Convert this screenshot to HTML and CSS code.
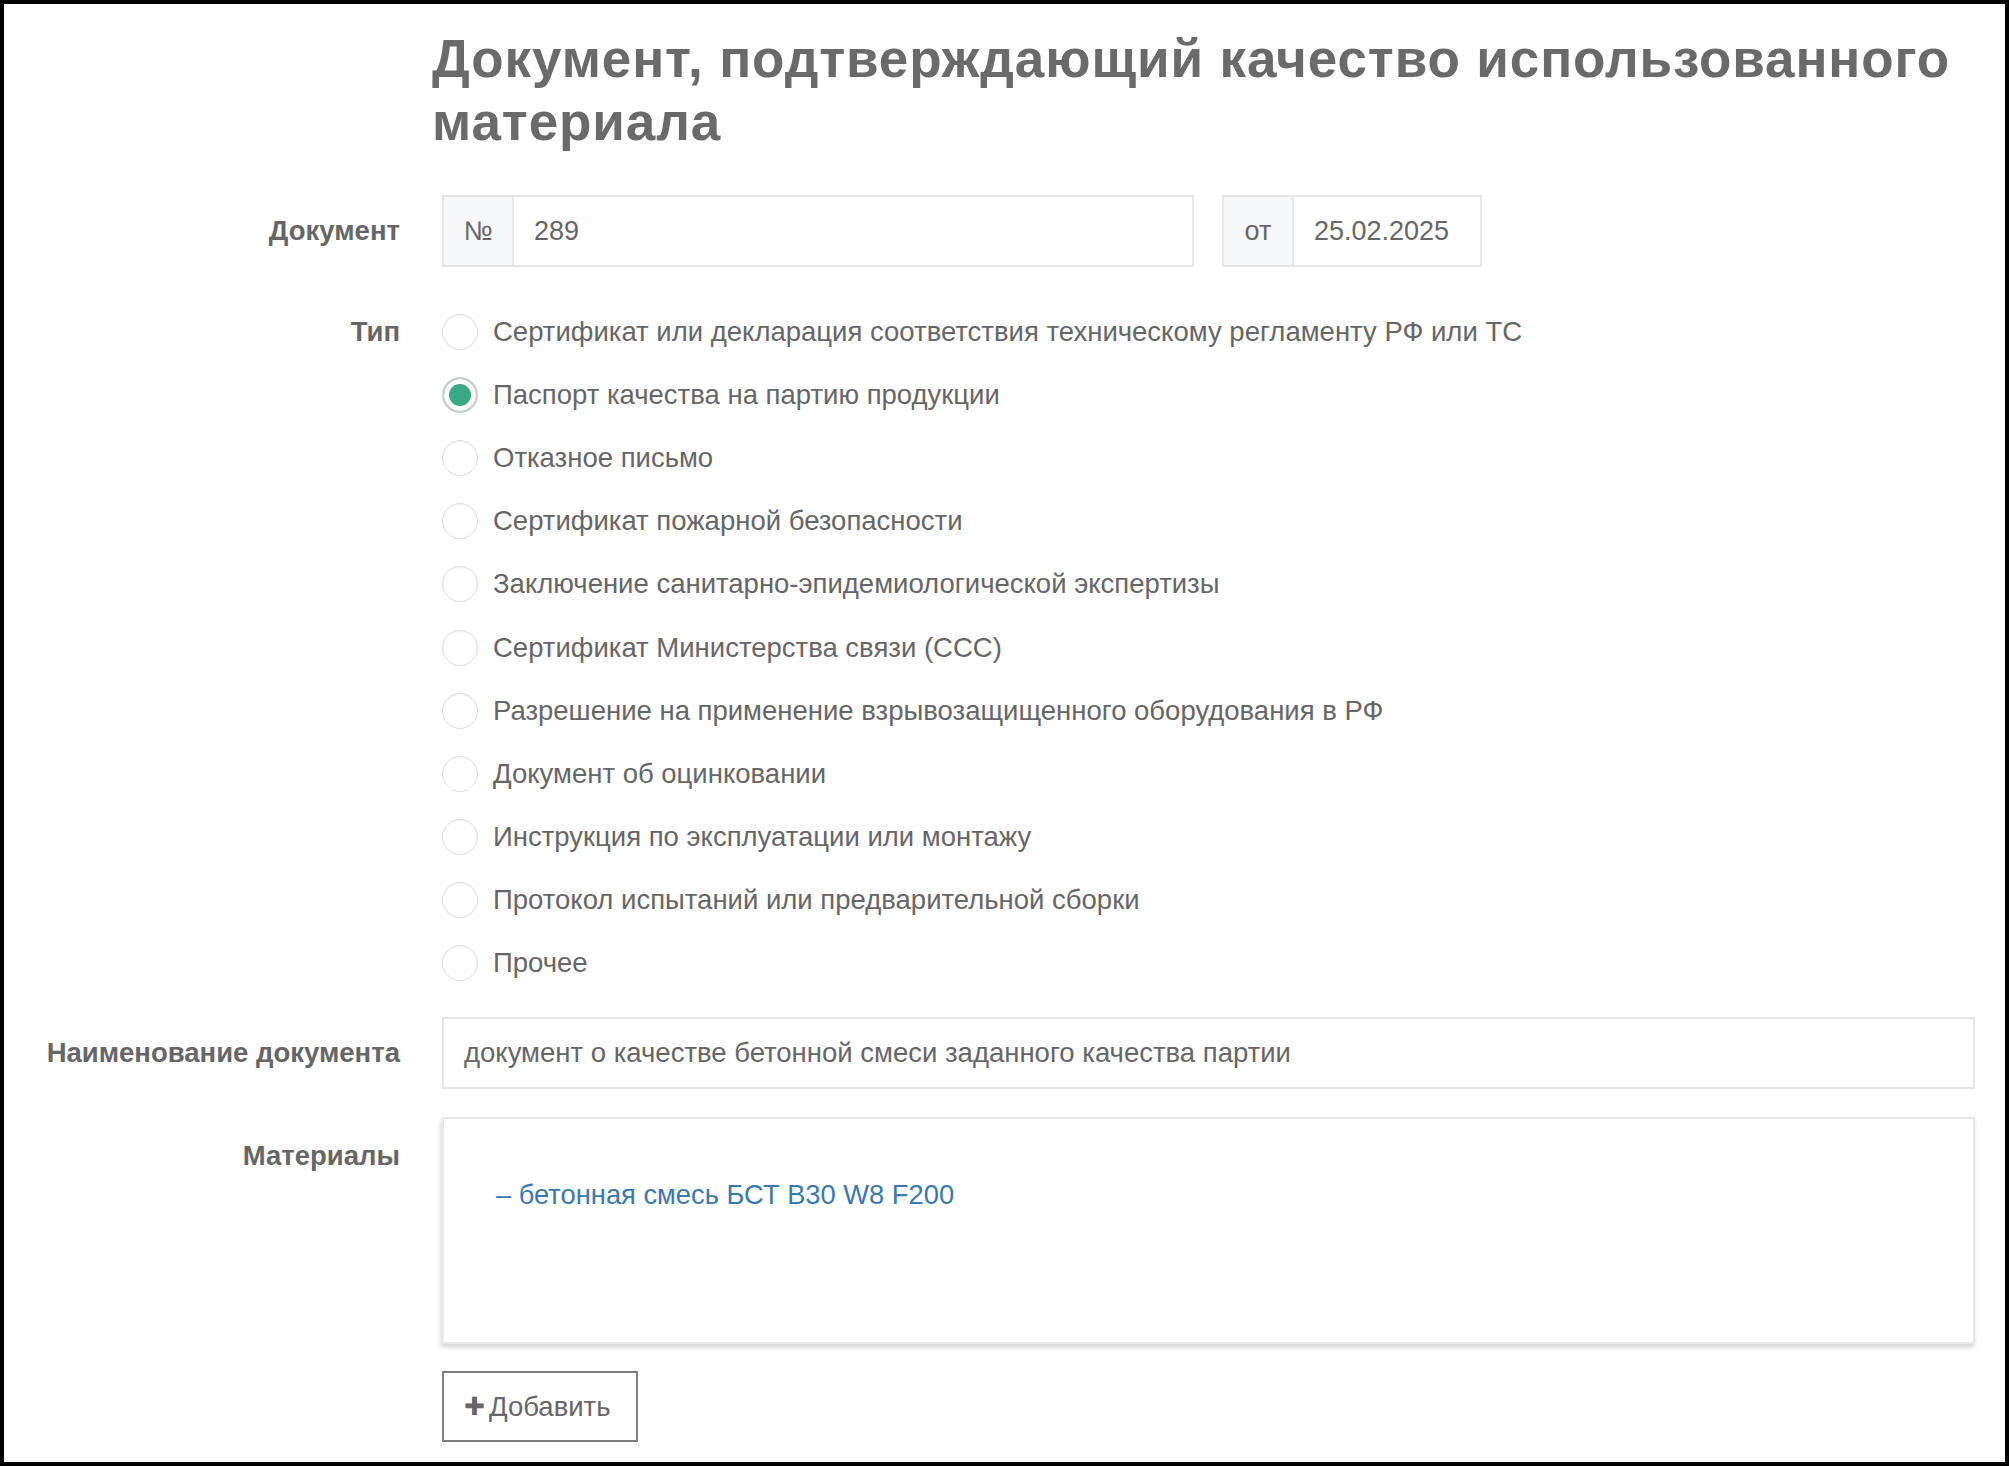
FILE: index.html
```html
<!DOCTYPE html>
<html lang="ru">
<head>
    <meta charset="UTF-8">
    <meta name="viewport" content="width=device-width, initial-scale=1.0">
    <title>Документ, подтверждающий качество</title>
    <link rel="stylesheet" href="styles.css">
</head>
<body>
    <div class="frame">
        <div class="title-row">
            <h1>Документ, подтверждающий качество использованного материала</h1>
        </div>

        <div class="form-row doc-row">
            <label class="row-label">Документ</label>
            <div class="doc-fields">
                <div class="input-group number-group">
                    <span class="addon">№</span>
                    <span class="field">289</span>
                </div>
                <div class="input-group date-group">
                    <span class="addon">от</span>
                    <span class="field">25.02.2025</span>
                </div>
            </div>
        </div>

        <div class="form-row type-row">
            <label class="row-label">Тип</label>
            <div class="radio-list">
                <div class="radio"><span class="circle"></span>Сертификат или декларация соответствия техническому регламенту РФ или ТС</div>
                <div class="radio checked"><span class="circle"></span>Паспорт качества на партию продукции</div>
                <div class="radio"><span class="circle"></span>Отказное письмо</div>
                <div class="radio"><span class="circle"></span>Сертификат пожарной безопасности</div>
                <div class="radio"><span class="circle"></span>Заключение санитарно-эпидемиологической экспертизы</div>
                <div class="radio"><span class="circle"></span>Сертификат Министерства связи (ССС)</div>
                <div class="radio"><span class="circle"></span>Разрешение на применение взрывозащищенного оборудования в РФ</div>
                <div class="radio"><span class="circle"></span>Документ об оцинковании</div>
                <div class="radio"><span class="circle"></span>Инструкция по эксплуатации или монтажу</div>
                <div class="radio"><span class="circle"></span>Протокол испытаний или предварительной сборки</div>
                <div class="radio"><span class="circle"></span>Прочее</div>
            </div>
        </div>

        <div class="form-row name-row">
            <label class="row-label">Наименование документа</label>
            <div class="field wide">документ о качестве бетонной смеси заданного качества партии</div>
        </div>

        <div class="form-row materials-row">
            <label class="row-label">Материалы</label>
            <div class="materials">
                <div class="materials-box">
                    <a href="#" class="material-link">– бетонная смесь БСТ В30 W8 F200</a>
                </div>
                <button class="add-btn"><span class="plus">✚</span>Добавить</button>
            </div>
        </div>
    </div>
</body>
</html>
```

FILE: styles.css
```css
body {
    margin: 0;
    font-family: "Liberation Sans", Arial, sans-serif;
    color: #666;
    background: #fff;
}

.frame {
    width: 2009px;
    height: 1466px;
    box-sizing: border-box;
    border: 4px solid #000;
    padding: 23px 30px 0 0;
}

.title-row {
    padding-left: 428px;
}

h1 {
    margin: 0;
    font-size: 53px;
    line-height: 63px;
    font-weight: bold;
    letter-spacing: 0.9px;
    color: #6a6a6a;
}

.form-row {
    display: grid;
    grid-template-columns: 396px 1fr;
    column-gap: 42px;
}

.row-label {
    text-align: right;
    font-weight: bold;
    font-size: 27.5px;
    color: #666;
}

/* document number + date */
.doc-row {
    margin-top: 42px;
}

.doc-row .row-label {
    line-height: 72px;
}

.doc-fields {
    display: flex;
    gap: 28px;
}

.input-group {
    display: flex;
    height: 72px;
    box-sizing: border-box;
    border: 2px solid #e6e6e6;
    font-size: 27px;
}

.number-group {
    width: 752px;
}

.date-group {
    width: 260px;
}

.addon {
    width: 68px;
    flex: none;
    background: #f6f7f8;
    border-right: 2px solid #e6e6e6;
    display: flex;
    align-items: center;
    justify-content: center;
}

.input-group .field {
    display: flex;
    align-items: center;
    padding-left: 20px;
}

/* radios */
.type-row {
    margin-top: 33px;
}

.type-row .row-label {
    line-height: 63px;
}

.radio {
    display: flex;
    align-items: center;
    height: 63.2px;
    font-size: 27.5px;
}

.circle {
    width: 36px;
    height: 36px;
    box-sizing: border-box;
    border-radius: 50%;
    border: 1.5px solid #dedede;
    box-shadow: inset 0 1px 2px rgba(0, 0, 0, 0.05);
    margin-right: 15px;
    flex: none;
}

.radio.checked .circle {
    border: 2px solid #cfcfcf;
    background: #3aa985;
    box-shadow: inset 0 0 0 5px #fff;
}

/* name */
.name-row {
    margin-top: 22px;
}

.name-row .row-label {
    line-height: 72px;
}

.field.wide {
    height: 72px;
    box-sizing: border-box;
    border: 2px solid #e6e6e6;
    padding-left: 20px;
    display: flex;
    align-items: center;
    font-size: 27.5px;
}

/* materials */
.materials-row {
    margin-top: 28px;
}

.materials-row .row-label {
    padding-top: 21px;
    line-height: 36px;
}

.materials-box {
    height: 227px;
    box-sizing: border-box;
    border: 2px solid #e8e8e8;
    box-shadow: -1px 3px 5px rgba(0, 0, 0, 0.18);
    padding: 58px 52px;
}

.material-link {
    font-size: 27.3px;
    line-height: 36px;
    color: #3a78b2;
    text-decoration: none;
}

.add-btn {
    margin-top: 27px;
    width: 196px;
    height: 71px;
    border: 2px solid #7c7c7c;
    background: #fff;
    color: #666;
    font-family: "Liberation Sans", Arial, sans-serif;
    font-size: 27.5px;
    padding: 0 0 0 20px;
    display: flex;
    align-items: center;
    cursor: pointer;
}

.plus {
    font-size: 25px;
    margin-right: 4px;
    color: #666;
}
```
